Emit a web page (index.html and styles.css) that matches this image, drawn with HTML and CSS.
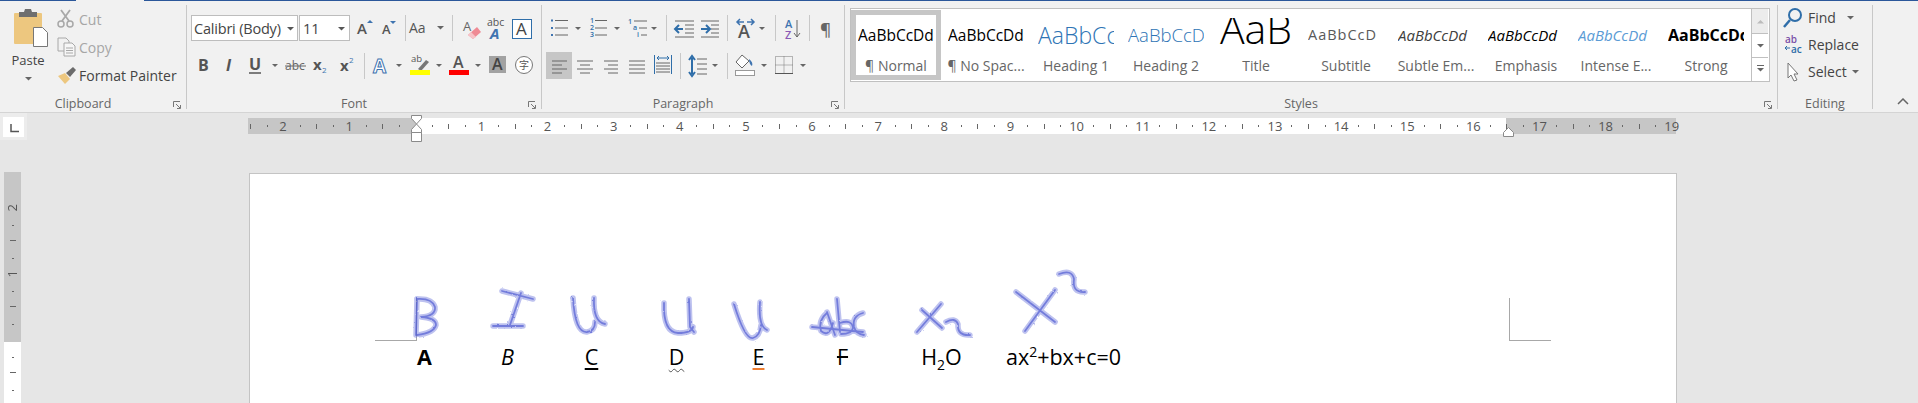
FILE: index.html
```html
<!DOCTYPE html>
<html>
<head>
<meta charset="utf-8">
<title>Document - Word</title>
<link rel="stylesheet" href="styles.css">
</head>
<body>
<div class="topline"></div>
<div class="ribbon">

<section class="group clipboard">
 <div class="body clip-body">
  <div class="paste">
   <svg width="57" height="42" viewBox="0 0 57 42"><rect x="14" y="8" width="28" height="31" rx="1" fill="#edc77f"/><path d="M19 12V7h5l1-3h6l1 3h5v5z" fill="#6f6f6f"/><path d="M33.500 22.500h9l5 5v14h-14z" fill="#fff" stroke="#777"/></svg>
   <span class="paste-name">Paste</span>
   <svg class="caret-below" width="9" height="5"><polygon points="1,1 8,1 4.5,4.5" fill="#666"/></svg>
  </div>
  <div class="small-rows">
   <div class="small-row off"><svg width="22" height="20" viewBox="0 0 22 20"><circle cx="4" cy="15" r="3" fill="none" stroke="#a8a8a8" stroke-width="1.5"/><circle cx="13" cy="15" r="3" fill="none" stroke="#a8a8a8" stroke-width="1.5"/><path d="M5 12L13 1M12 12L4 1" stroke="#a8a8a8" stroke-width="1.8"/></svg>Cut</div>
   <div class="small-row off"><svg width="22" height="20" viewBox="0 0 22 20"><path d="M1 1h8l3 3v4M1 1v13h6" fill="none" stroke="#a8a8a8"/><path d="M7 6h8l3 3v10H7z" fill="#f6f6f6" stroke="#a8a8a8"/><path d="M9 11h7M9 13.500h7M9 16h7" stroke="#a8a8a8"/></svg>Copy</div>
   <div class="small-row"><svg width="22" height="20" viewBox="0 0 22 20"><path d="M1 11l7-3 5 6-5 5z" fill="#edc77f"/><path d="M9 8l7-6 3 3-6 7z" fill="#6b6b6b"/></svg>Format Painter</div>
  </div>
 </div>
 <div class="group-label">Clipboard<svg class="launcher" width="8" height="8"><path d="M.5 6V.5H7M3 3l4 4M7.500 4v3.500H4" fill="none" stroke="#777"/></svg></div>
</section>

<section class="group font">
 <div class="body">
  <div class="tool-row top-row">
   <div class="combo face">Calibri (Body)<svg width="9" height="5"><polygon points="1,1 8,1 4.5,4.500" fill="#555"/></svg></div>
   <div class="combo size">11<svg width="9" height="5"><polygon points="1,1 8,1 4.500,4.500" fill="#555"/></svg></div>
   <svg width="26" height="26" viewBox="0 0 26 26"><text x="7" y="19" font-size="15" font-weight="600" fill="#555">A</text><polygon points="17,8 23,8 20,5" fill="#3f74b0"/></svg>
   <svg width="24" height="26" viewBox="0 0 24 26"><text x="6" y="19" font-size="13" font-weight="600" fill="#555">A</text><polygon points="14,6 20,6 17,9" fill="#3f74b0"/></svg>
   <i class="gap5"></i><i class="sep"></i>
   <svg width="42" height="26" viewBox="0 0 42 26"><text x="3" y="18" font-size="14" fill="#555">Aa</text><polygon points="31,11 38,11 34.500,14.500" fill="#666"/></svg>
   <i class="gap4"></i><i class="sep"></i><i class="gap5"></i>
   <svg width="26" height="26" viewBox="0 0 26 26"><text x="5" y="16" font-size="13" fill="#666">A</text><path d="M10 20l9-8 4 5-8 7z" fill="#ef8a94"/><path d="M10 20l3-3 5 5-3 2z" fill="#f7c3c8"/></svg>
   <svg width="24" height="26" viewBox="0 0 24 26"><text x="3" y="11" font-size="10.500" fill="#555">abc</text><text x="6" y="24" font-size="15" font-weight="700" font-style="italic" fill="#3f74b0">A</text></svg>
   <svg width="27" height="26" viewBox="0 0 27 26"><rect x="4.500" y="4.500" width="19" height="19" fill="#fff" stroke="#2f6ea9"/><text x="8" y="20" font-size="17" fill="#444">A</text></svg>
  </div>
  <div class="tool-row low-row">
   <svg width="25" height="27" viewBox="0 0 25 27"><text x="7" y="19" class="fmt" font-weight="700">B</text></svg>
   <svg width="27" height="27" viewBox="0 0 27 27"><text x="10" y="19" class="fmt" font-weight="700" font-style="italic">I</text></svg>
   <svg width="41" height="27" viewBox="0 0 41 27"><text x="6" y="18" class="fmt" font-weight="700">U</text><path d="M6 21h12" stroke="#555" stroke-width="1.500"/><polygon points="29,12 35,12 32,15" fill="#666"/></svg>
   <svg width="23" height="27" viewBox="0 0 23 27"><text x="1" y="18" font-size="12" fill="#666">abc</text><path d="M1 14h21" stroke="#666"/></svg>
   <svg width="28" height="27" viewBox="0 0 28 27"><text x="6" y="18" font-size="15" font-weight="700" fill="#555">x</text><text x="15" y="21" font-size="8" fill="#3f74b0">2</text></svg>
   <svg width="25" height="27" viewBox="0 0 25 27"><text x="5" y="19" font-size="15" font-weight="700" fill="#555">x</text><text x="14" y="11" font-size="8" fill="#3f74b0">2</text></svg>
   <i class="gap4"></i><i class="sep"></i>
   <svg width="43" height="27" viewBox="0 0 43 27"><text x="8" y="21" font-size="19" font-weight="700" fill="#fff" stroke="#3f74b0">A</text><polygon points="31,12 37,12 34,15" fill="#666"/></svg>
   <svg width="39" height="27" viewBox="0 0 39 27"><text x="3" y="10" font-size="9.500" fill="#555">ab</text><path d="M10 17l8-9 3 2-8 9z" fill="#777"/><rect x="2" y="18" width="20" height="5" fill="#ffff00"/><polygon points="28,12 34,12 31,15" fill="#666"/></svg>
   <svg width="40" height="27" viewBox="0 0 40 27"><text x="6" y="16" font-size="16" fill="#555" font-weight="600">A</text><rect x="2" y="18" width="20" height="5" fill="#ff0000"/><polygon points="28,12 34,12 31,15" fill="#666"/></svg>
   <svg width="22" height="27" viewBox="0 0 22 27"><rect x="2" y="4" width="17" height="17" fill="#a2a2a2"/><text x="5" y="18" font-size="16" font-weight="600" fill="#444">A</text></svg>
   <svg width="30" height="27" viewBox="0 0 30 27"><circle cx="15" cy="13" r="8.500" fill="#fff" stroke="#777"/><text x="10" y="17" class="cjk" font-size="10" fill="#555">字</text></svg>
  </div>
 </div>
 <div class="group-label">Font<svg class="launcher" width="8" height="8"><path d="M.5 6V.5H7M3 3l4 4M7.500 4v3.500H4" fill="none" stroke="#777"/></svg></div>
</section>

<section class="group para">
 <div class="body">
  <div class="tool-row top-row para-row">
   <svg width="39" height="26" viewBox="0 0 39 26"><path d="M6 5.500h2M6 13h2M6 20h2" stroke="#3f74b0" stroke-width="2"/><path d="M10 5.500h13M10 13h13M10 20h13" stroke="#666"/><polygon points="30,12 36,12 33,15" fill="#666"/></svg>
   <svg width="39" height="26" viewBox="0 0 39 26"><text x="6" y="8" class="tiny">1</text><text x="6" y="15" class="tiny">2</text><text x="6" y="22" class="tiny">3</text><path d="M11 5.500h12M11 13h12M11 20h12" stroke="#666"/><polygon points="30,12 36,12 33,15" fill="#666"/></svg>
   <svg width="37" height="26" viewBox="0 0 37 26"><text x="5" y="9" class="tiny">1</text><text x="10" y="15" class="tiny">a</text><text x="14" y="22" class="tiny">i</text><path d="M11 6h13M16 13h8M18 20h6" stroke="#666"/><polygon points="28,12 34,12 31,15" fill="#666"/></svg>
   <i class="gap6"></i><i class="sep"></i>
   <svg width="30" height="26" viewBox="0 0 30 26"><path d="M8 6h19M18 10h9M18 14h9M18 18h9M8 22h19" stroke="#666"/><path d="M16 14H9M12 10l-4 4 4 4" fill="none" stroke="#2f6ea9" stroke-width="2"/></svg>
   <svg width="26" height="26" viewBox="0 0 26 26"><path d="M4 6h18M14 10h8M14 14h8M14 18h8M4 22h18" stroke="#666"/><path d="M4 14h8M9 10l4 4-4 4" fill="none" stroke="#2f6ea9" stroke-width="2"/></svg>
   <i class="gap4"></i><i class="sep"></i>
   <svg width="43" height="26" viewBox="0 0 43 26"><text x="10" y="23" font-size="18" font-weight="600" fill="#555">A</text><path d="M9 7h7M12 4L9 7l3 3M19 7h7M23 4l3 3-3 3" fill="none" stroke="#3f74b0" stroke-width="1.500"/><polygon points="31,12 37,12 34,15" fill="#666"/></svg>
   <i class="gap4"></i><i class="sep"></i>
   <svg width="33" height="26" viewBox="0 0 33 26"><text x="9" y="13" font-size="11" fill="#3f74b0" font-weight="600">A</text><text x="9" y="24" font-size="11" fill="#8a5ab5" font-weight="600">Z</text><path d="M21 5v17M18 18l3 4 3-4" fill="none" stroke="#666"/></svg>
   <i class="sep"></i>
   <svg width="32" height="26" viewBox="0 0 32 26"><text x="10" y="20" font-size="17" font-weight="600" fill="#666">¶</text></svg>
  </div>
  <div class="tool-row low-row para-row">
   <svg class="picked" width="26" height="27" viewBox="0 0 26 27"><path d="M6 9h15M6 13h10M6 17h15M6 21h10" stroke="#666"/></svg>
   <svg width="26" height="27" viewBox="0 0 26 27"><path d="M5 9h16M8 13h10M5 17h16M8 21h10" stroke="#666"/></svg>
   <svg width="26" height="27" viewBox="0 0 26 27"><path d="M6 9h14M10 13h10M6 17h14M10 21h10" stroke="#666"/></svg>
   <svg width="26" height="27" viewBox="0 0 26 27"><path d="M5 9h16M5 13h16M5 17h16M5 21h16" stroke="#666"/></svg>
   <svg width="26" height="27" viewBox="0 0 26 27"><path d="M4.500 3v19M21.500 3v19" stroke="#2f6ea9"/><path d="M7 6h12M9 4L7 6l2 2M17 4l2 2-2 2" fill="none" stroke="#2f6ea9"/><path d="M6 11h14M6 14h14M6 17h14M6 20h14" stroke="#666"/></svg>
   <i class="gap4"></i><i class="sep"></i>
   <svg width="42" height="27" viewBox="0 0 42 27"><path d="M11 6v16M8 8l3-4 3 4M8 20l3 4 3-4" fill="none" stroke="#2f6ea9" stroke-width="2"/><path d="M16 7h10M16 12h10M16 17h10M16 22h10" stroke="#666"/><polygon points="31,12 37,12 34,15" fill="#666"/></svg>
   <i class="gap4"></i><i class="sep"></i>
   <svg width="43" height="27" viewBox="0 0 43 27"><path d="M14 3l-6 7 6 6 7-7z" fill="#fff" stroke="#666"/><path d="M21 7c3 2 4 5 3 7-2-1-3-4-3-7z" fill="#3f74b0"/><rect x="7.500" y="18.500" width="19" height="5" fill="#fff" stroke="#999"/><polygon points="33,12 39,12 36,15" fill="#666"/></svg>
   <svg width="39" height="27" viewBox="0 0 39 27"><path d="M4.500 4.500h17v17h-17zM13 4.500v17M4.500 13h17" fill="none" stroke="#777" stroke-dasharray="1 1"/><path d="M4 21.500h18" stroke="#555"/><polygon points="29,12 35,12 32,15" fill="#666"/></svg>
  </div>
 </div>
 <div class="group-label">Paragraph<svg class="launcher" width="8" height="8"><path d="M.5 6V.5H7M3 3l4 4M7.500 4v3.500H4" fill="none" stroke="#777"/></svg></div>
</section>

<section class="group styles">
 <div class="body">
  <div class="gallery">
   <div class="style-item on"><div class="preview">AaBbCcDd</div><div class="style-name">¶ Normal</div></div>
   <div class="style-item"><div class="preview">AaBbCcDd</div><div class="style-name">¶ No Spac...</div></div>
   <div class="style-item"><div class="preview p-h1">AaBbCc</div><div class="style-name">Heading 1</div></div>
   <div class="style-item"><div class="preview p-h2">AaBbCcD</div><div class="style-name">Heading 2</div></div>
   <div class="style-item"><div class="preview p-title">AaB</div><div class="style-name">Title</div></div>
   <div class="style-item"><div class="preview p-sub">AaBbCcD</div><div class="style-name">Subtitle</div></div>
   <div class="style-item"><div class="preview p-em p-subtle">AaBbCcDd</div><div class="style-name">Subtle Em...</div></div>
   <div class="style-item"><div class="preview p-em">AaBbCcDd</div><div class="style-name">Emphasis</div></div>
   <div class="style-item"><div class="preview p-em p-intense">AaBbCcDd</div><div class="style-name">Intense E...</div></div>
   <div class="style-item"><div class="preview p-strong">AaBbCcDd</div><div class="style-name">Strong</div></div>
   <div class="gallery-scroll">
    <div class="scroll-btn dim"><svg width="9" height="5"><polygon points="1,4.500 8,4.500 4.500,1" fill="#bbb"/></svg></div>
    <div class="scroll-btn"><svg width="9" height="5"><polygon points="1,1 8,1 4.500,4.500" fill="#666"/></svg></div>
    <div class="scroll-btn"><svg width="9" height="8"><path d="M1 .5h7" stroke="#666"/><polygon points="1,3 8,3 4.500,6.500" fill="#666"/></svg></div>
   </div>
  </div>
 </div>
 <div class="group-label">Styles<svg class="launcher" width="8" height="8"><path d="M.5 6V.5H7M3 3l4 4M7.500 4v3.500H4" fill="none" stroke="#777"/></svg></div>
</section>

<section class="group editing">
 <div class="body edit-body">
  <div class="small-row"><svg width="30" height="24" viewBox="0 0 30 24"><circle cx="17" cy="9" r="6" fill="none" stroke="#2f6ea9" stroke-width="2"/><path d="M12 14l-6 7" stroke="#2f6ea9" stroke-width="2.500"/></svg>Find<svg class="after" width="9" height="5"><polygon points="1,1 8,1 4.500,4.500" fill="#666"/></svg></div>
  <div class="small-row"><svg width="30" height="24" viewBox="0 0 30 24"><text x="7" y="10" font-size="10" font-weight="600" fill="#7a4fa8">ab</text><text x="13" y="20" font-size="10" font-weight="600" fill="#2f6ea9">ac</text><path d="M12 15H7M9 13l-2 2 2 2" fill="none" stroke="#2f6ea9"/></svg>Replace</div>
  <div class="small-row"><svg width="30" height="24" viewBox="0 0 30 24"><path d="M10 3v15l3-3 3 6 3-1-3-6h4z" fill="#fff" stroke="#777"/></svg>Select<svg class="after near" width="9" height="5"><polygon points="1,1 8,1 4.500,4.500" fill="#666"/></svg></div>
 </div>
 <div class="group-label centered">Editing</div>
</section>

<div class="collapse"><svg width="12" height="7"><path d="M1 6l5-5 5 5" fill="none" stroke="#666" stroke-width="1.500"/></svg></div>
</div>

<div class="workspace">
 <div class="ruler-row">
  <div class="tab-stop"><div class="tab-face"><svg width="9" height="9"><path d="M1 0v7.500h8" fill="none" stroke="#555" stroke-width="1.500"/></svg></div></div>
  <div class="h-ruler">
   <div class="cm">2</div><div class="cm">1</div><div class="cm"></div>
   <div class="cm">1</div><div class="cm">2</div><div class="cm">3</div><div class="cm">4</div><div class="cm">5</div>
   <div class="cm">6</div><div class="cm">7</div><div class="cm">8</div><div class="cm">9</div><div class="cm">10</div>
   <div class="cm">11</div><div class="cm">12</div><div class="cm">13</div><div class="cm">14</div><div class="cm">15</div>
   <div class="cm">16</div><div class="cm">17</div><div class="cm">18</div><div class="cm last">19</div>
   <svg class="marker left-marker" width="12" height="28" viewBox="0 0 12 28"><path d="M.5.5h10v3L5.500 9 .5 3.500zM5.500 9l5 5.500v3H.5v-3zM.5 17.500h10v9H.5z" fill="#fff" stroke="#8a8a8a"/></svg>
   <svg class="marker right-marker" width="12" height="10" viewBox="0 0 12 10"><path d="M5.500.5l5 5v4H.5v-4z" fill="#fff" stroke="#8a8a8a"/></svg>
  </div>
 </div>
 <div class="doc-row">
  <div class="v-ruler">
   <div class="v-start"></div>
   <div class="vcm first"><span>2</span></div><div class="vcm"><span>1</span></div><div class="vcm"></div><div class="vcm"></div>
  </div>
  <div class="page">
   <i class="crop crop-left"></i>
   <i class="crop crop-right"></i>
   <svg class="ink" width="1427" height="229" viewBox="250 174 1427 229">
    <defs>
     <filter id="rough" x="-5%" y="-20%" width="110%" height="140%">
      <feTurbulence type="fractalNoise" baseFrequency=".3" numOctaves="2" seed="4" result="noise"/>
      <feDisplacementMap in="SourceGraphic" in2="noise" scale="2"/>
      <feGaussianBlur stdDeviation=".6"/>
     </filter>
     <g id="strokes">
      <path d="M417 299L416 335"/>
      <path d="M417 299Q432 298 435 307Q436 316 421 317Q436 318 436 325Q434 333 417 335"/>
      <path d="M502 291L533 299M521 293L510 325M493 326L523 326"/>
      <path d="M573 298Q575 333 587 332Q595 331 595 322M594 298Q593 322 605 324"/>
      <path d="M664 303Q663 332 678 333Q692 333 693 327M689 299L690 327L694 332"/>
      <path d="M734 304Q745 340 753 338Q760 336 761 325M760 302Q758 326 767 330"/>
      <path d="M812 327L863 332"/>
      <path d="M827 313Q818 320 821 331Q829 338 833 323M827 312L835 335"/>
      <path d="M837 299L840 332M840 323Q852 319 853 328Q852 334 841 334"/>
      <path d="M863 313Q852 316 854 327Q856 334 864 335"/>
      <path d="M922 310L942 328M941 304L917 332"/>
      <path d="M946 322Q955 317 958 324Q957 336 970 335"/>
      <path d="M1016 292L1055 322M1055 290L1025 331"/>
      <path d="M1059 274Q1072 269 1074 279Q1072 293 1085 292"/>
     </g>
    </defs>
    <use href="#strokes" class="ink-soft"/>
    <use href="#strokes" class="ink-core"/>
   </svg>
   <div class="doc-line">
    <span><b>A</b></span>
    <span><em>B</em></span>
    <span><u class="u-single">C</u></span>
    <span><u class="u-wavy">D</u></span>
    <span><u class="u-orange">E</u></span>
    <span><s>F</s></span>
    <span>H<sub>2</sub>O</span>
    <span>ax<sup>2</sup>+bx+c=0</span>
   </div>
  </div>
 </div>
</div>
</body>
</html>
```
FILE: styles.css
```css
* {
 box-sizing: border-box;
}
html, body {
 height: 403px;
 margin: 0;
 overflow: hidden;
}
body {
 background: #e6e6e6;
 color: #444;
 font-family: "Open Sans", "Liberation Sans", sans-serif;
 font-size: 14px;
}
svg {
 display: block;
 flex: none;
}
svg text {
 font-family: "Open Sans", "Liberation Sans", sans-serif;
}
svg text.cjk {
 font-family: "Noto Sans CJK SC", sans-serif;
}
svg text.fmt {
 fill: #555;
 font-size: 16px;
}
svg text.tiny {
 fill: #2f6ea9;
 font-size: 7px;
 font-weight: 600;
}

.topline {
 background: linear-gradient(90deg, #2b579a 76px, #f1f1f1 76px, #f1f1f1 144px, #2b579a 144px);
 height: 1px;
}
.ribbon {
 background: #f1f1f1;
 border-bottom: 1px solid #d4d4d4;
 display: flex;
 height: 112px;
}
.group {
 border-right: 1px solid #c8c8c8;
 display: flex;
 flex-direction: column;
 flex: none;
 height: 104px;
 margin-top: 4px;
}
.body {
 flex: 1;
}
.group-label {
 color: #666;
 font-size: 12.500px;
 height: 16px;
 line-height: 16px;
 margin-bottom: -3px;
 padding-right: 20px;
 position: relative;
 text-align: center;
}
.group-label.centered {
 padding-right: 0;
}
.launcher {
 position: absolute;
 right: 5px;
 top: 5px;
}
.clipboard { width: 187px; }
.font { width: 355px; }
.para { width: 303px; }
.styles { width: 933px; }
.editing { width: 95px; }

.clip-body {
 display: flex;
}
.paste {
 align-items: center;
 display: flex;
 flex-direction: column;
 width: 57px;
}
.paste svg:first-child {
 align-self: flex-start;
}
.paste-name {
 font-size: 13px;
 line-height: 18px;
 margin: 4px 0 0 -1px;
}
.caret-below {
 margin-top: 7px;
}
.small-row {
 align-items: center;
 display: flex;
 height: 28px;
 white-space: nowrap;
}
.small-row.off {
 color: #a6a6a6;
}
.edit-body {
 margin-top: -1px;
}
.edit-body .small-row {
 height: 27px;
}
.after {
 margin-left: 10px;
}
.after.near {
 margin-left: 4px;
}

.tool-row {
 align-items: center;
 display: flex;
 margin-left: 4px;
}
.top-row {
 height: 26px;
 margin-top: 10px;
}
.low-row {
 height: 27px;
 margin-top: 11px;
}
.para-row {
 margin-left: 3px;
}
.low-row.para-row {
 margin-left: 4px;
}
.sep {
 background: #c8c8c8;
 display: block;
 flex: none;
 height: 26px;
 width: 1px;
}
.gap4 { display: block; flex: none; width: 4px; }
.gap5 { display: block; flex: none; width: 5px; }
.gap6 { display: block; flex: none; width: 6px; }
.picked {
 background: #c6c6c6;
}
.combo {
 align-items: center;
 background: #fff;
 border: 1px solid #bdbdbd;
 display: flex;
 font-size: 14.500px;
 height: 26px;
 justify-content: space-between;
 padding: 0 2px 0 2px;
 white-space: nowrap;
}
.combo.face {
 letter-spacing: -.2px;
 width: 107px;
}
.combo.size {
 margin-left: 1px;
 padding: 0 3px 0 3px;
 width: 51px;
}

.gallery {
 background: #fff;
 border: 1px solid #c0c0c0;
 display: flex;
 height: 74px;
 margin: 3px 0 0 5px;
 padding-top: 1px;
 width: 920px;
}
.style-item {
 border: 5px solid transparent;
 flex: none;
 height: 70px;
 width: 90px;
}
.style-item.on {
 border-color: #c6c6c6;
}
.preview {
 color: #000;
 font-size: 15.500px;
 height: 30px;
 line-height: 34px;
 margin: 3px 0 0 2px;
 overflow: hidden;
 white-space: nowrap;
 width: 76px;
}
.p-h1 {
 color: #2e74b5;
 font-size: 23px;
 font-weight: 300;
}
.p-h2 {
 color: #2e74b5;
 font-size: 18.500px;
 font-weight: 300;
}
.p-title {
 font-size: 41px;
 font-weight: 300;
 line-height: 20px;
 text-align: center;
}
.p-sub {
 color: #595959;
 font-size: 14.500px;
 letter-spacing: 1px;
}
.p-em {
 font-size: 15px;
 font-style: italic;
}
.p-subtle {
 color: #404040;
}
.p-intense {
 color: #5b9bd5;
}
.p-strong {
 font-size: 16px;
 font-weight: 700;
}
.style-name {
 color: #666;
 font-size: 14px;
 line-height: 18px;
 margin-top: 9px;
 text-align: center;
 white-space: nowrap;
}
.gallery-scroll {
 border-left: 1px solid #c0c0c0;
 display: flex;
 flex-direction: column;
 margin-top: -1px;
 width: 17px;
}
.scroll-btn {
 align-items: center;
 border-bottom: 1px solid #c0c0c0;
 display: flex;
 height: 24px;
 justify-content: center;
}
.scroll-btn.dim {
 background: #ececec;
 height: 26px;
}
.scroll-btn:last-child {
 border-bottom: 0;
}
.collapse {
 align-self: flex-end;
 margin: 0 0 7px 24px;
}

.ruler-row {
 display: flex;
 height: 60px;
}
.tab-stop {
 background: #ececec;
 height: 27px;
 padding: 4px 3px;
 width: 27px;
}
.tab-face {
 background: #fff;
 height: 20px;
 padding: 7px 0 0 7px;
 width: 21px;
}
.h-ruler {
 background: linear-gradient(90deg, #c6c6c6 168px, #fff 168px, #fff 1258px, #c6c6c6 1258px);
 color: #555;
 display: flex;
 height: 16px;
 margin: 5px 0 0 221px;
 padding-left: 2px;
 position: relative;
 width: 1428px;
}
.cm {
 background:
  linear-gradient(#666, #666) 0 50% / 1px 5px no-repeat,
  linear-gradient(#666, #666) 16.500px 50% / 1px 2px no-repeat,
  linear-gradient(#666, #666) 49.600px 50% / 1px 2px no-repeat;
 flex: none;
 font-size: 13px;
 line-height: 16px;
 text-align: center;
 width: 66.140px;
}
.cm.last {
 background:
  linear-gradient(#666, #666) 0 50% / 1px 5px no-repeat,
  linear-gradient(#666, #666) 16.500px 50% / 1px 2px no-repeat;
}
.marker {
 position: absolute;
}
.left-marker {
 left: 163px;
 top: -3px;
}
.right-marker {
 left: 1255px;
 top: 9px;
}

.doc-row {
 display: flex;
}
.v-ruler {
 background: linear-gradient(#c6c6c6 170px, #fff 170px);
 color: #555;
 height: 231px;
 margin: -1px 0 0 4px;
 overflow: hidden;
 width: 17px;
}
.v-start {
 height: 3px;
}
.vcm {
 align-items: center;
 background:
  linear-gradient(#666, #666) 50% 100% / 6px 1px no-repeat,
  linear-gradient(#666, #666) 50% 16.500px / 2px 1px no-repeat,
  linear-gradient(#666, #666) 50% 49.600px / 2px 1px no-repeat;
 display: flex;
 font-size: 13px;
 height: 66.140px;
 justify-content: center;
}
.vcm.first {
 background:
  linear-gradient(#666, #666) 50% 100% / 6px 1px no-repeat,
  linear-gradient(#666, #666) 50% 49.600px / 2px 1px no-repeat;
}
.vcm span {
 line-height: 17px;
 transform: rotate(180deg);
 writing-mode: vertical-rl;
}
.page {
 background: #fff;
 border: 1px solid #c4c4c4;
 border-bottom: 0;
 color: #000;
 height: 230px;
 margin-left: 228px;
 position: relative;
 width: 1428px;
}
.crop {
 border-bottom: 1px solid #a8a8a8;
 display: block;
 height: 43px;
 position: absolute;
 top: 124px;
 width: 42px;
}
.crop-left {
 border-right: 1px solid #a8a8a8;
 left: 125px;
}
.crop-right {
 border-left: 1px solid #a8a8a8;
 left: 1259px;
}
.ink {
 left: 0;
 position: absolute;
 top: 0;
}
.ink use {
 fill: none;
 stroke-linecap: round;
 stroke-linejoin: round;
}
.ink-soft {
 filter: url(#rough);
 opacity: .45;
 stroke: #6f79dc;
 stroke-width: 5.500;
}
.ink-core {
 filter: url(#rough);
 opacity: .6;
 stroke: #4350cf;
 stroke-width: 1.800;
}
.doc-line {
 display: grid;
 font-size: 21.500px;
 grid-template-columns: 83px 83px 85px 85px 79px 89px 109px 135px;
 line-height: 26px;
 margin-left: 133px;
 padding-top: 170px;
 text-align: center;
 width: 748px;
}
.doc-line sub, .doc-line sup {
 font-size: 14px;
 line-height: 0;
}
.doc-line s {
 text-decoration-thickness: 2px;
}
.u-single {
 text-decoration: underline 2px #000;
 text-underline-offset: 3px;
}
.u-wavy {
 text-decoration: underline wavy 1px #555;
 text-underline-offset: 3px;
}
.u-orange {
 text-decoration: underline 2px #ed7d31;
 text-underline-offset: 3px;
}
```
